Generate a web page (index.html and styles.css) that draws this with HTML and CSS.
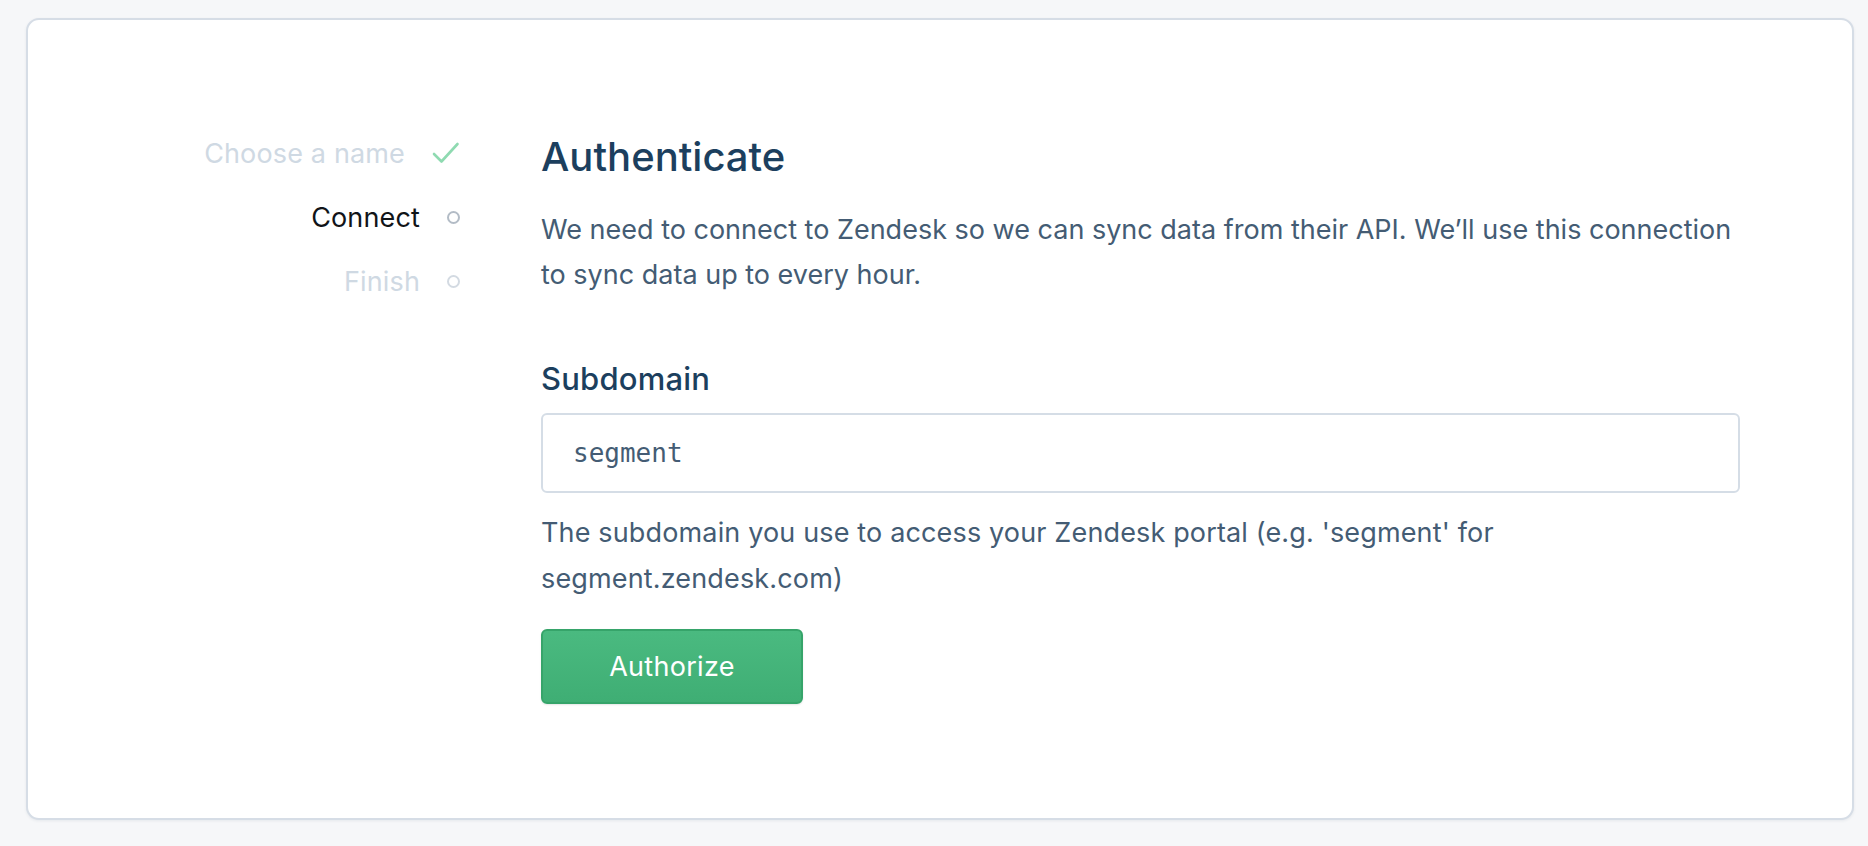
FILE: index.html
```html
<!DOCTYPE html>
<html lang="en">
<head>
<meta charset="utf-8">
<title>Authenticate</title>
<link rel="stylesheet" href="styles.css">
</head>
<body>
  <div class="card">
    <ul class="steps">
      <li class="step done">
        <span class="step-label">Choose a name</span>
        <svg class="check" width="28" height="24" viewBox="0 0 28 24"><path d="M2 13 L9.5 20.5 L25.5 3" fill="none" stroke="#8fdab1" stroke-width="2.6" stroke-linecap="round" stroke-linejoin="round"/></svg>
      </li>
      <li class="step current">
        <span class="step-label">Connect</span>
        <span class="ring"></span>
      </li>
      <li class="step todo">
        <span class="step-label">Finish</span>
        <span class="ring"></span>
      </li>
    </ul>
    <main class="content">
      <h1 class="title">Authenticate</h1>
      <p class="lead">We need to connect to Zendesk so we can sync data from their API. We’ll use this connection to sync data up to every hour.</p>
      <label class="field-label" for="subdomain">Subdomain</label>
      <div class="input" id="subdomain">segment</div>
      <p class="hint">The subdomain you use to access your Zendesk portal (e.g. 'segment' for segment.zendesk.com)</p>
      <button class="btn">Authorize</button>
    </main>
  </div>
</body>
</html>
```
FILE: styles.css
```css
* { box-sizing: border-box; }
html, body { margin: 0; padding: 0; }
body {
  background: #f6f7f9;
  padding: 18px 14px 26px 26px;
  font-family: Inter, "Noto Sans", sans-serif;
  height: 846px;
}
.card {
  background: #fff;
  border: 2px solid #d6dde6;
  border-radius: 13px;
  box-shadow: 0 1px 3px rgba(40, 60, 90, 0.08);
  height: 802px;
  display: flex;
  align-items: flex-start;
  padding: 101px 112px 0 0;
}
.steps {
  list-style: none;
  margin: 0;
  padding: 0;
  width: 432px;
  flex: none;
  display: flex;
  flex-direction: column;
}
.step {
  height: 64px;
  display: flex;
  align-items: center;
  justify-content: flex-end;
  gap: 27px;
  font-size: 27px;
  letter-spacing: 0.15px;
}
.check { display: block; flex: none; }
.done .step-label, .todo .step-label { color: #cfd9e3; }
.current .step-label { color: #111418; }
.ring {
  flex: none;
  width: 13px;
  height: 13px;
  border-radius: 50%;
  border: 2px solid #b3bcc6;
}
.todo .ring { border-color: #d3dae2; }
.content {
  flex: 1;
  margin-left: 81px;
  margin-top: 12px;
  display: flex;
  flex-direction: column;
  align-items: flex-start;
}
.title {
  margin: 0;
  font-size: 40px;
  line-height: 48px;
  font-weight: 500;
  color: #1c3f5e;
}
.lead {
  margin: 26px 0 0;
  font-size: 27px;
  line-height: 45px;
  letter-spacing: 0;
  color: #445c74;
}
.field-label {
  margin-top: 64px;
  font-size: 31px;
  line-height: 36px;
  font-weight: 500;
  letter-spacing: 0.2px;
  color: #1c3f5e;
}
.input {
  margin-top: 16px;
  width: 100%;
  height: 80px;
  border: 2px solid #d5dde6;
  border-radius: 6px;
  padding: 0 30px;
  display: flex;
  align-items: center;
  font-family: "DejaVu Sans Mono", monospace;
  font-size: 26px;
  color: #445c74;
}
.hint {
  margin: 17px 0 0;
  font-size: 27px;
  line-height: 46px;
  letter-spacing: 0.15px;
  color: #445c74;
}
.btn {
  margin-top: 27px;
  width: 262px;
  height: 75px;
  border: 2px solid #36a46a;
  border-radius: 6px;
  background: linear-gradient(#4aba80, #3fae74);
  color: #fff;
  font-family: Inter, "Noto Sans", sans-serif;
  font-size: 27px;
  letter-spacing: 0.3px;
  box-shadow: 0 1px 2px rgba(0, 0, 0, 0.1);
}
```
